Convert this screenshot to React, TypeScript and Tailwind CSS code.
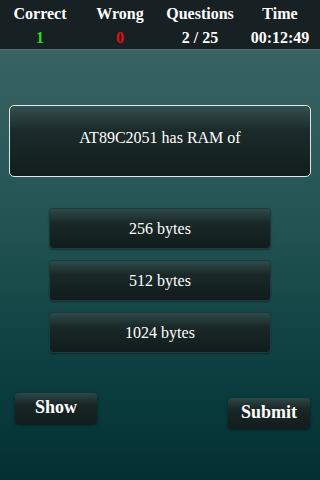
import * as React from "react";

function Stat({ label, value, color }: { label: string; value: string; color: string }) {
	return (
		<div className="flex flex-col items-center">
			<span className="text-[16px] font-bold leading-[18px] text-white">{label}</span>
			<span className={`mt-[6px] text-[16px] font-bold leading-[18px] ${color}`}>{value}</span>
		</div>
	);
}

export default function App() {
	const options = ["256 bytes", "512 bytes", "1024 bytes"];
	return (
		<div className="[font-family:Liberation_Serif,serif] flex h-[480px] w-[320px] flex-col overflow-hidden bg-[linear-gradient(to_bottom,#3f6767_0%,#245454_45%,#0b3d3e_80%,#033032_100%)]">
			<div className="grid h-[50px] grid-cols-4 border-b border-[#56706f] bg-[#172022] pt-[5px]">
				<Stat label="Correct" value="1" color="text-[#22dd22]" />
				<Stat label="Wrong" value="0" color="text-[#e01010]" />
				<Stat label="Questions" value="2 / 25" color="text-white" />
				<Stat label="Time" value="00:12:49" color="text-white" />
			</div>

			<div className="mx-[9px] mt-[55px] flex h-[72px] items-center justify-center rounded-[5px] border border-[#dfe8e8] bg-[linear-gradient(to_bottom,#34504f_0%,#1b2a2a_35%,#131e1e_100%)] pb-[7px]">
				<span className="text-[16px] text-white">AT89C2051 has RAM of</span>
			</div>

			<div className="mt-[31px] flex flex-col items-center gap-[11px]">
				{options.map((o) => (
					<button
						key={o}
						type="button"
						className="flex h-[41px] w-[222px] items-center justify-center rounded-[4px] border border-[#1f3a3a] bg-[linear-gradient(to_bottom,#2f4a4a_0%,#1a2828_35%,#111c1c_100%)] text-[16px] text-white shadow-[0_1px_2px_rgba(0,0,0,0.35)]"
					>
						{o}
					</button>
				))}
			</div>

			<div className="mt-[40px] flex items-start justify-between px-[15px] pr-[10px]">
				<button
					type="button"
					className="flex h-[31px] w-[82px] items-start justify-center rounded-[4px] bg-[linear-gradient(to_bottom,#2f4848_0%,#1a2727_35%,#121c1c_100%)] pt-[5px] text-[18px] font-bold leading-[18px] text-white shadow-[0_1px_3px_rgba(0,0,0,0.5)]"
				>
					Show
				</button>
				<button
					type="button"
					className="mt-[5px] flex h-[31px] w-[82px] items-start justify-center rounded-[4px] bg-[linear-gradient(to_bottom,#2f4848_0%,#1a2727_35%,#121c1c_100%)] pt-[5px] text-[18px] font-bold leading-[18px] text-white shadow-[0_1px_3px_rgba(0,0,0,0.5)]"
				>
					Submit
				</button>
			</div>
		</div>
	);
}
